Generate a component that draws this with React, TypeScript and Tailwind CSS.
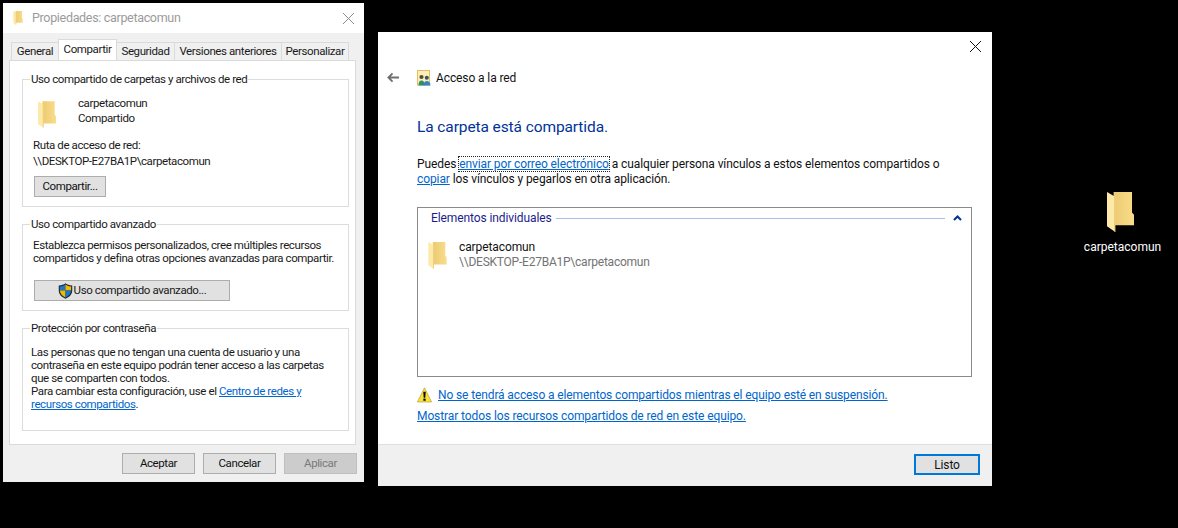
const FONT = "font-['Roboto','Liberation_Sans',sans-serif]";

function Folder({ className }: { className: string }) {
  return (
    <svg viewBox="0 0 82 121" className={className}>
      <defs>
        <linearGradient id="fb" x1="0" x2="1" y1="0" y2="0">
          <stop offset="0" stopColor="#edca72" />
          <stop offset="1" stopColor="#f9dd8a" />
        </linearGradient>
      </defs>
      <path d="M20 0H76V62L82 69V101H20Z" fill="url(#fb)" />
      <path d="M0 0L25 14V121L0 104Z" fill="#fdeaa8" />
      <path d="M25 14V121L22 119V12Z" fill="#e9c46c" />
    </svg>
  );
}

function Shield() {
  return (
    <svg viewBox="0 0 16 17" className="w-[15px] h-[16px] shrink-0">
      <path d="M8 .2C6 1.800 4 2.400.8 2.600V8c0 4 3 7 7.200 8.800 4.200-1.800 7.200-4.800 7.200-8.800V2.600C12 2.400 10 1.800 8 .2Z" fill="#1f2a36" />
      <path d="M8 1.600V8H2V3.700C4.400 3.500 6.300 3 8 1.600Z" fill="#1a78c8" />
      <path d="M8 1.600C9.700 3 11.600 3.500 14 3.700V8H8Z" fill="#f5b800" />
      <path d="M2 8H8V15.300C4.700 14 2.200 11.500 2 8Z" fill="#f5b800" />
      <path d="M8 8H14C13.800 11.500 11.300 14 8 15.300Z" fill="#1a78c8" />
    </svg>
  );
}

function Warning() {
  return (
    <svg viewBox="0 0 15 16" className="w-[15px] h-[16px] shrink-0">
      <path d="M7.500.8 14.600 15H.4Z" fill="#fbe23a" stroke="#a8962a" strokeWidth=".6" strokeLinejoin="round" />
      <path d="M6.300 4.800h2.400L8.300 10.800H6.700Z" fill="#0a0a0a" />
      <rect x="6.400" y="11.600" width="2.200" height="2.200" fill="#0a0a0a" />
    </svg>
  );
}

function PeopleIcon() {
  return (
    <svg viewBox="0 0 14 16" className="w-[14px] h-[16px] shrink-0 -mr-[1px]">
      <rect x=".5" y=".5" width="12" height="14.500" fill="#fbeeb8" stroke="#e6bf5c" />
      <circle cx="4.500" cy="7" r="2.100" fill="#5a4a38" />
      <path d="M1.500 15.500c0-3.500 1-5 3-5s3.200 1.500 3.200 5Z" fill="#2f8f6a" />
      <circle cx="9.800" cy="7.800" r="2" fill="#3c4f63" />
      <path d="M6.600 15.500c0-3 1.200-4.500 3.200-4.500s3.700 1.500 3.700 4.500Z" fill="#2f86c0" />
    </svg>
  );
}

function Group({ title, className, children }: { title: string; className: string; children: React.ReactNode }) {
  return (
    <fieldset className={`border border-[#dcdcdc] ${className}`}>
      <legend className="ml-[7px] px-[1px] leading-[16px] text-[11.5px] text-[#1a1a1a]">{title}</legend>
      {children}
    </fieldset>
  );
}

function Tab({ label, className }: { label: string; className: string }) {
  return (
    <div className={`h-[18px] mt-[2px] border border-b-0 border-[#dadada] bg-[#f0f0f0] flex items-center justify-center text-[11.5px] leading-none text-[#1a1a1a] ${className}`}>
      {label}
    </div>
  );
}

function WinButton({ label, className, disabled }: { label: string; className: string; disabled?: boolean }) {
  return (
    <div className={`h-[21px] flex items-center justify-center border text-[11.5px] ${disabled ? "border-[#bfbfbf] bg-[#cccccc] text-[#7a7a7a]" : "border-[#adadad] bg-[#e1e1e1] text-[#111]"} ${className}`}>
      {label}
    </div>
  );
}

function PropertiesWindow() {
  return (
    <div className="ml-[3px] mt-[3px] w-[361px] h-[479px] bg-[#f0f0f0] flex flex-col tracking-[-0.4px]">
      <div className="h-[30px] bg-white flex items-center shrink-0">
        <Folder className="ml-[10px] w-[10px] h-[14px]" />
        <span className="ml-[9px] text-[12.5px] tracking-[-0.32px] text-[#9b9b9b]">Propiedades: carpetacomun</span>
        <svg viewBox="0 0 11 11" className="ml-auto mr-[10px] w-[11px] h-[11px]">
          <path d="M0 0 11 11M11 0 0 11" stroke="#8a8a8a" strokeWidth="1" fill="none" />
        </svg>
      </div>
      <div className="flex h-[27px] pl-[8px] items-end shrink-0 relative z-10">
        <Tab label="General" className="w-[47px] border-r-0" />
        <div className="h-[21px] w-[59px] border border-b-0 border-[#dadada] bg-white flex items-start pt-[2px] justify-center text-[11.5px] leading-[14px] text-[#1a1a1a]">Compartir</div>
        <Tab label="Seguridad" className="w-[58px] border-l-0" />
        <Tab label="Versiones anteriores" className="w-[107px] border-l-0" />
        <Tab label="Personalizar" className="w-[67px] border-l-0" />
      </div>
      <div className="ml-[6px] w-[347px] h-[385px] bg-white border border-[#dadada] pl-[12px] pr-[6px] pt-[10px] flex flex-col gap-[9px] shrink-0 text-[11.5px] text-[#1a1a1a]">
        <Group title="Uso compartido de carpetas y archivos de red" className="h-[136px]">
          <div className="pl-[11px]">
            <div className="flex pt-[9px] pl-[4px]">
              <Folder className="w-[18px] h-[27px] mt-[5px]" />
              <div className="ml-[22px] leading-[15px]">
                <div>carpetacomun</div>
                <div>Compartido</div>
              </div>
            </div>
            <div className="mt-[9px] -ml-[1px] leading-[16px]">
              <div>Ruta de acceso de red:</div>
              <div>\\DESKTOP-E27BA1P\carpetacomun</div>
            </div>
            <WinButton label="Compartir..." className="mt-[7px] w-[72px]" />
          </div>
        </Group>
        <Group title="Uso compartido avanzado" className="h-[95px]">
          <div className="pl-[10px] pt-[7px] leading-[13px]">
            <div>Establezca permisos personalizados, cree múltiples recursos</div>
            <div>compartidos y defina otras opciones avanzadas para compartir.</div>
            <div className="mt-[15px] ml-[1px] w-[196px] h-[21px] flex items-center justify-center gap-[1px] border border-[#adadad] bg-[#e1e1e1]">
              <Shield />
              <span>Uso compartido avanzado...</span>
            </div>
          </div>
        </Group>
        <Group title="Protección por contraseña" className="h-[111px]">
          <div className="pl-[8px] pt-[10px] leading-[13px]">
            <div>Las personas que no tengan una cuenta de usuario y una</div>
            <div>contraseña en este equipo podrán tener acceso a las carpetas</div>
            <div>que se comparten con todos.</div>
            <div>Para cambiar esta configuración, use el <span className="text-[#0066cc] underline">Centro de redes y</span></div>
            <div><span className="text-[#0066cc] underline">recursos compartidos</span>.</div>
          </div>
        </Group>
      </div>
      <div className="flex justify-end gap-[8px] pr-[7px] pt-[8px]">
        <WinButton label="Aceptar" className="w-[73px]" />
        <WinButton label="Cancelar" className="w-[73px]" />
        <WinButton label="Aplicar" className="w-[73px]" disabled />
      </div>
    </div>
  );
}

function NetworkWindow() {
  return (
    <div className="ml-[14px] mt-[32px] w-[614px] h-[454px] bg-white flex flex-col text-[12px] tracking-[-0.1px] text-[#111]">
      <div className="h-[412px] shrink-0 pl-[39px] pr-[20px] flex flex-col">
        <div className="flex justify-end -mr-[9px] pt-[9px] h-[20px]">
          <svg viewBox="0 0 11 11" className="w-[11px] h-[11px]">
            <path d="M0 0 11 11M11 0 0 11" stroke="#111" strokeWidth="1" fill="none" />
          </svg>
        </div>
        <div className="flex items-center h-[15px] mt-[18px]">
          <svg viewBox="0 0 13 11" className="-ml-[30px] mr-[18px] w-[12px] h-[11px]">
            <path d="M13 5.500H1.500M6 1 1.500 5.500 6 10" stroke="#6f6f6f" strokeWidth="2" fill="none" />
          </svg>
          <PeopleIcon />
          <span className="ml-[6px]">Acceso a la red</span>
        </div>
        <div className="mt-[31px] text-[15.5px] leading-[22px] tracking-[-0.1px] text-[#003399]">La carpeta está compartida.</div>
        <div className="mt-[19px] leading-[15px]">
          <div>
            Puedes <span className="text-[#0066cc] underline outline-1 outline-dotted outline-[#222]">enviar por correo electrónico</span> a cualquier persona vínculos a estos elementos compartidos o
          </div>
          <div><span className="text-[#0066cc] underline">copiar</span> los vínculos y pegarlos en otra aplicación.</div>
        </div>
        <div className="mt-[20px] h-[170px] border border-[#8a8a8a] flex flex-col shrink-0">
          <div className="flex items-center pl-[13px] pr-[9px] h-[20px]">
            <span className="text-[#1c1c8c]">Elementos individuales</span>
            <div className="flex-1 ml-[4px] h-px bg-[#a9bde8]" />
            <svg viewBox="0 0 9 6" className="ml-[8px] w-[9px] h-[6px]">
              <path d="M1 5 4.500 1.500 8 5" stroke="#003399" strokeWidth="2" fill="none" />
            </svg>
          </div>
          <div className="flex pl-[10px] pt-[14px]">
            <Folder className="w-[19px] h-[27px]" />
            <div className="ml-[12px] leading-[15px] -mt-[2px]">
              <div>carpetacomun</div>
              <div className="text-[#737373] tracking-[-0.23px]">\\DESKTOP-E27BA1P\carpetacomun</div>
            </div>
          </div>
        </div>
        <div className="mt-[9px] flex items-center gap-[6px] h-[17px] tracking-[-0.12px]">
          <Warning />
          <span className="text-[#0066cc] underline">No se tendrá acceso a elementos compartidos mientras el equipo esté en suspensión.</span>
        </div>
        <div className="mt-[5px] leading-[17px] text-[#0066cc] underline">Mostrar todos los recursos compartidos de red en este equipo.</div>
      </div>
      <div className="flex-1 bg-[#f0f0f0] border-t border-[#dfdfdf] flex justify-end items-start pt-[9px] pr-[12px]">
        <div className="w-[66px] h-[21px] border-2 border-[#0078d7] bg-[#e1e1e1] flex items-center justify-center">Listo</div>
      </div>
    </div>
  );
}

export default function App() {
  return (
    <div className={`w-[1178px] h-[528px] bg-black flex items-start overflow-hidden ${FONT}`}>
      <PropertiesWindow />
      <NetworkWindow />
      <div className="ml-[92px] mt-[192px] w-[77px] flex flex-col items-center">
        <Folder className="w-[27px] h-[40px] mr-[4px]" />
        <span className="mt-[7px] text-[12px] leading-[16px] text-white">carpetacomun</span>
      </div>
    </div>
  );
}
